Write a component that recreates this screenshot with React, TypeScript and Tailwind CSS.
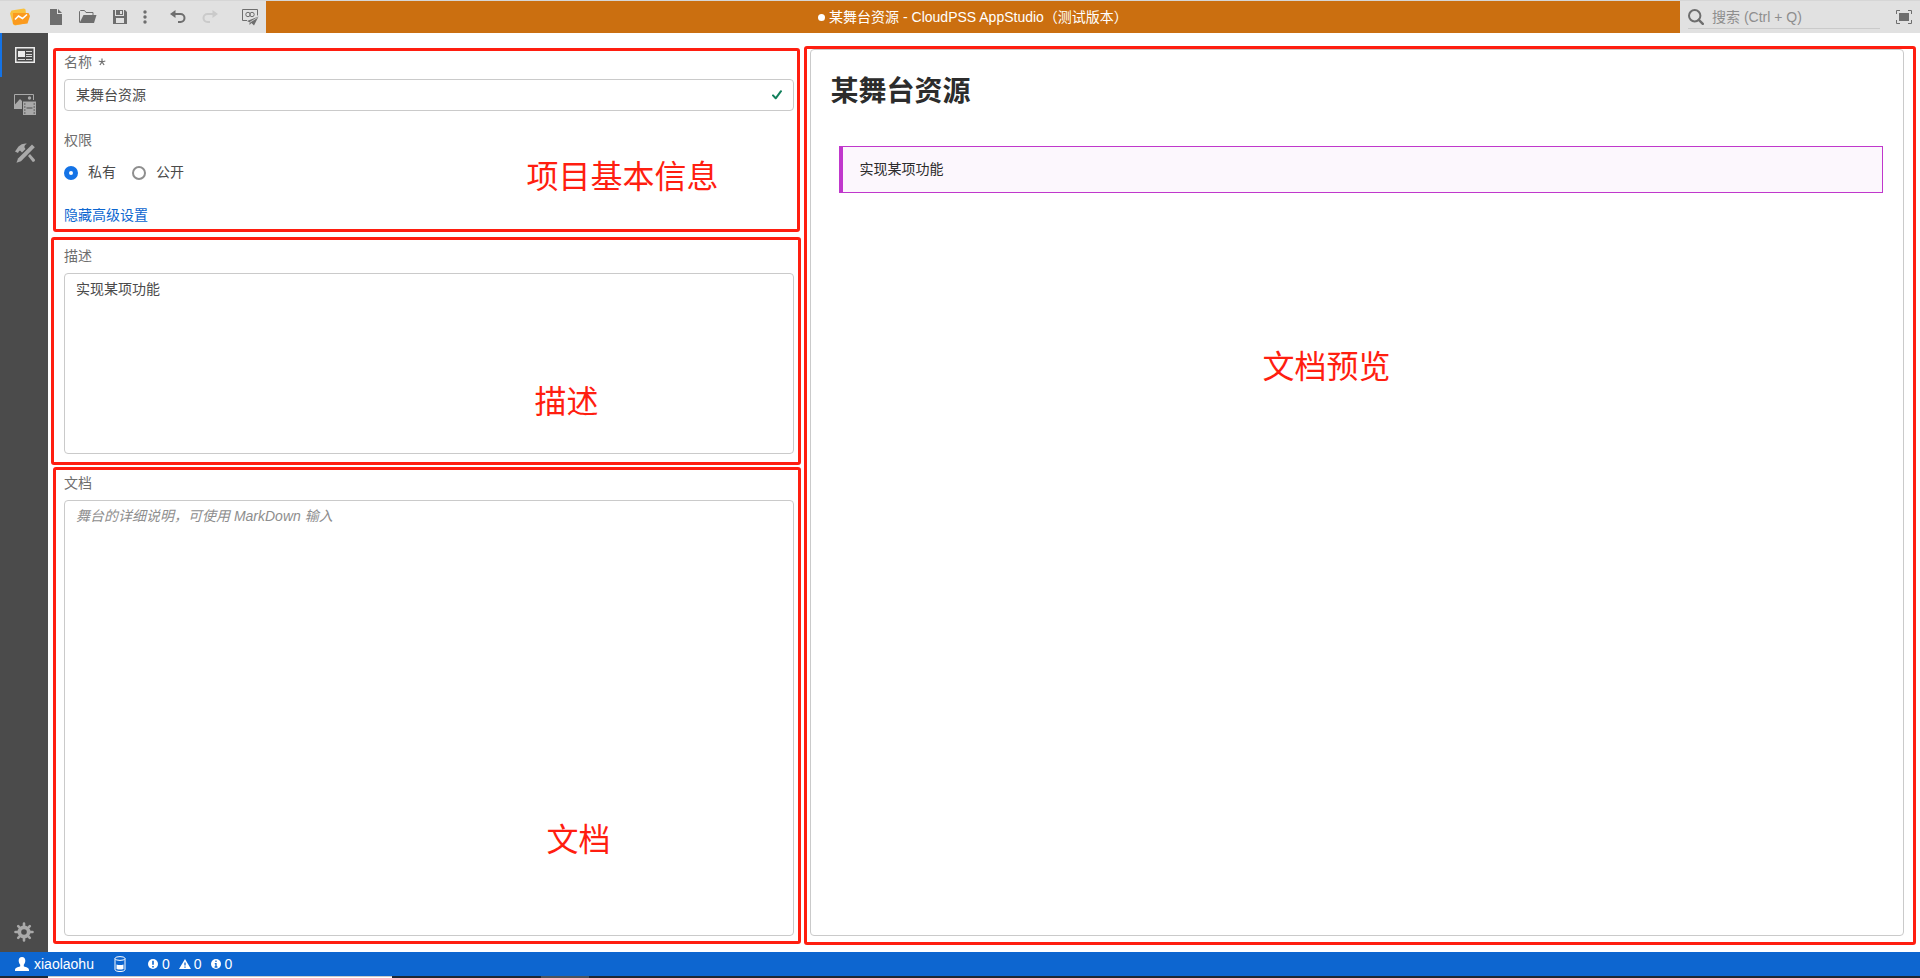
import React, { useState } from "react";

type IconProps = { className?: string };

function LogoIcon() {
  return (
    <svg width="20" height="18" viewBox="0 0 20 18" aria-hidden="true">
      <path d="M1.500 2.500 14 .5l1.500 1L17 15 5 17.500 3 16 0 5.500z" fill="#f9c13d" />
      <path d="M3 5h15.500L20 8l-2.500 7.500L5 17 3 16z" fill="#fb9a1e" />
      <path d="M5 11.500 8.500 8l4 2.500L17 6.500" fill="none" stroke="#fff" strokeWidth="1.600" />
    </svg>
  );
}
function FileIcon() {
  return (
    <svg width="12" height="16" viewBox="0 0 12 16" fill="#6e6e6e" aria-hidden="true">
      <path d="M0 0h7v5h5v11H0z" />
      <path d="M8 0l4 4H8z" />
    </svg>
  );
}
function FolderIcon() {
  return (
    <svg width="18" height="14" viewBox="0 0 18 14" aria-hidden="true">
      <path d="M.5 12.500V1.500L1.500.5h4l1.500 2h7V5" fill="none" stroke="#6e6e6e" />
      <path d="M4.500 5H17.500L15 13H.5z" fill="#6e6e6e" />
    </svg>
  );
}
function SaveIcon() {
  return (
    <svg width="14" height="14" viewBox="0 0 14 14" fill="#6e6e6e" aria-hidden="true">
      <path fillRule="evenodd" d="M0 0h2v6h9V0h1l2 2v12H0zM3 8v5h8V8z" />
      <path d="M3 0h7v5H3zM7 1v3h2V1z" fillRule="evenodd" />
    </svg>
  );
}
function DotsIcon() {
  return (
    <svg width="4" height="14" viewBox="0 0 4 14" fill="#6e6e6e" aria-hidden="true">
      <circle cx="2" cy="2" r="1.700" />
      <circle cx="2" cy="7" r="1.700" />
      <circle cx="2" cy="12" r="1.700" />
    </svg>
  );
}
function UndoIcon({ className }: IconProps) {
  return (
    <svg width="16" height="14" viewBox="0 0 16 14" className={className} aria-hidden="true">
      <path d="M5.500 0v8L0 4z" fill="currentColor" />
      <path d="M4 4h6.500a4 4 0 0 1 0 8H8" fill="none" stroke="currentColor" strokeWidth="2" />
    </svg>
  );
}
function PublishIcon() {
  return (
    <svg width="17" height="17" viewBox="0 0 17 17" fill="none" stroke="#6e6e6e" aria-hidden="true">
      <path d="M5 11.500H.5V.5h15v6" />
      <circle cx="6" cy="5.500" r="2.200" />
      <circle cx="10" cy="5.500" r="2.200" />
      <path d="M16.500 7.500 5 12l2.500 1.200V16l2-2 2.500 2.500z" fill="#6e6e6e" stroke="none" />
      <path d="M15.500 8.500 7.500 13.500" stroke="#e1e1e1" strokeWidth=".8" />
    </svg>
  );
}
function SearchIcon() {
  return (
    <svg width="16" height="16" viewBox="0 0 16 16" className="shrink-0" fill="none" stroke="#6e6e6e" strokeWidth="2" aria-hidden="true">
      <circle cx="6.700" cy="6.700" r="5.700" />
      <path d="m10.800 10.800 4 4" strokeWidth="2.400" strokeLinecap="round" />
    </svg>
  );
}
function FullscreenIcon() {
  return (
    <svg width="16" height="14" viewBox="0 0 16 14" aria-hidden="true">
      <path d="M.5 4V.5H4M12 .5h3.500V4M15.500 10v3.500H12M4 13.500H.5V10" fill="none" stroke="#6e6e6e" />
      <path d="M3 3h10v8H3z" fill="#6e6e6e" />
    </svg>
  );
}
function OverviewIcon() {
  return (
    <svg width="20" height="16" viewBox="0 0 20 16" aria-hidden="true">
      <path d="M.75.75h18.500v14.500H.75z" fill="none" stroke="#ececec" strokeWidth="1.500" />
      <path d="M3 4h7v6H3z" fill="#ececec" />
      <path d="M11 4.500h6M11 7.500h6M11 9.500h6M3 12.500h7M11 12.500h6" stroke="#d6d6d6" />
    </svg>
  );
}
function MediaIcon() {
  return (
    <svg width="22" height="21" viewBox="0 0 22 21" aria-hidden="true">
      <path d="M.5 15V.5h19V6" fill="none" stroke="#a9a9a9" />
      <path d="M0 15V11.500L6 5l2 2v8z" fill="#a9a9a9" />
      <circle cx="15.500" cy="4" r="1.700" fill="#a9a9a9" />
      <path d="M9 7.500h13V21H9z" fill="#a9a9a9" />
      <path d="M12.500 14h6" stroke="#4b4b4b" />
      <path d="M10 10h1.500M10 13h1.500M10 16h1.500M10 19h1.500M19.500 10H21M19.500 13H21M19.500 16H21M19.500 19H21" stroke="#4b4b4b" />
    </svg>
  );
}
function ToolsIcon() {
  return (
    <svg width="20" height="20" viewBox="0 0 20 20" fill="#a9a9a9" aria-hidden="true">
      <path d="M0 8.500 3.500 3.500Q7 0 12 .7 9 2 9.500 4.500L10.500 6 7 9.500 5 7.500Q3.500 8 3 10z" />
      <path d="m13 13 2-2 4.800 5.500q.5 2.500-2 2.500z" />
      <path d="m17 1.500 2.800 2.800L6 18.200 1.500 19.800 3 15.500z" />
    </svg>
  );
}
function GearIcon() {
  return (
    <svg width="20" height="20" viewBox="0 0 20 20" aria-hidden="true">
      <g stroke="#a9a9a9" strokeWidth="2.600" strokeLinecap="round">
        <path d="M10 1.500v17M1.500 10h17M4.200 4.200l11.600 11.600M15.800 4.200 4.200 15.800" />
      </g>
      <circle cx="10" cy="10" r="6.500" fill="#a9a9a9" />
      <circle cx="10" cy="10" r="2.800" fill="#4b4b4b" />
    </svg>
  );
}
function AsteriskIcon() {
  return (
    <svg width="8" height="8" viewBox="0 0 8 8" fill="none" stroke="#6e6e6e" strokeWidth="1.200" aria-hidden="true">
      <path d="M4 .5V4L.7 3M4 4l3.300-1M4 4 1.900 7M4 4l2.100 3" />
    </svg>
  );
}
function CheckIcon() {
  return (
    <svg width="10" height="10" viewBox="0 0 10 10" fill="none" stroke="#12805c" strokeWidth="2" aria-hidden="true">
      <path d="M1 5.400 3.700 8.300 9 1.200" strokeLinecap="round" strokeLinejoin="round" />
    </svg>
  );
}
function UserIcon() {
  return (
    <svg width="14" height="14" viewBox="0 0 14 14" fill="#fff" aria-hidden="true">
      <path d="M7 0c2.200 0 3.300 1.500 3.300 3.600S9.500 7 8.800 7.700v1.500c.4.700 5.200 1 5.200 3.800v1H0v-1c0-2.800 4.800-3.100 5.200-3.800V7.700C4.500 7 3.700 5.700 3.700 3.600S4.800 0 7 0z" />
    </svg>
  );
}
function StorageIcon() {
  return (
    <svg width="12" height="16" viewBox="0 0 12 16" fill="none" stroke="#fff" aria-hidden="true">
      <ellipse cx="6" cy="2.500" rx="5" ry="1.900" />
      <path d="M1 2.500v11c0 1.200 2 2 5 2s5-.8 5-2v-11" />
      <path d="M2.500 8.500q3.500 1.200 7 0V13q-3.500 1.200-7 0z" fill="#fff" stroke="none" />
    </svg>
  );
}
function ErrorIcon() {
  return (
    <svg width="10" height="10" viewBox="0 0 10 10" aria-hidden="true">
      <circle cx="5" cy="5" r="5" fill="#fff" />
      <path d="M5 1.800v4M5 7v1.500" stroke="#0d66d0" strokeWidth="1.600" />
    </svg>
  );
}
function WarningIcon() {
  return (
    <svg width="12" height="10" viewBox="0 0 12 10" aria-hidden="true">
      <path d="M6 0l6 10H0z" fill="#fff" />
      <path d="M6 3.500v3M6 7.500v1.300" stroke="#0d66d0" strokeWidth="1.300" />
    </svg>
  );
}
function InfoIcon() {
  return (
    <svg width="10" height="10" viewBox="0 0 10 10" aria-hidden="true">
      <circle cx="5" cy="5" r="5" fill="#fff" />
      <path d="M5 1.500V3M3.800 4.600H5V8M3.600 8h2.800" stroke="#0d66d0" strokeWidth="1.300" fill="none" />
    </svg>
  );
}

function ToolButton({ label, className = "w-8", children }: { label: string; className?: string; children: React.ReactNode }) {
  return (
    <button type="button" aria-label={label} className={`flex h-8 items-center justify-center ${className}`}>
      {children}
    </button>
  );
}

function Frame({ inset, text, place }: { inset: string; text: string; place: string }) {
  return (
    <div className={`pointer-events-none absolute rounded-[3px] border-3 border-[#ff1e10] ${inset}`}>
      <span className={`absolute text-[32px] leading-10 whitespace-nowrap text-[#ff1e10] ${place}`}>{text}</span>
    </div>
  );
}

const labelClass = "mb-1 block h-[26px] text-sm leading-[26px] text-[#6e6e6e]";
const boxClass = "block w-full rounded border border-[#cacaca] bg-white px-[11px] text-sm text-[#4b4b4b] outline-none";

function RadioOption({ label, checked, onSelect }: { label: string; checked: boolean; onSelect: () => void }) {
  return (
    <label className="flex items-center gap-[10px]">
      <input
        type="radio"
        name="permission"
        checked={checked}
        onChange={onSelect}
        className="size-[14px] appearance-none rounded-full border-2 border-[#8e8e8e] bg-white checked:border-5 checked:border-[#1473e6]"
      />
      <span className="pb-[2px]">{label}</span>
    </label>
  );
}

export default function App() {
  const [name, setName] = useState("某舞台资源");
  const [isPrivate, setIsPrivate] = useState(true);
  const [summary, setSummary] = useState("实现某项功能");

  return (
    <div className="flex h-screen flex-col bg-white font-['Liberation_Sans','Noto_Sans_CJK_SC',sans-serif] text-sm text-[#4b4b4b]">
      <header className="flex h-[33px] shrink-0 border-t border-[#d6d6d6] bg-[#e1e1e1]">
        <div className="flex">
          <div className="flex w-10 items-center justify-center">
            <LogoIcon />
          </div>
          <ToolButton label="新建"><FileIcon /></ToolButton>
          <ToolButton label="打开"><FolderIcon /></ToolButton>
          <ToolButton label="保存"><SaveIcon /></ToolButton>
          <ToolButton label="更多" className="w-[18px]"><DotsIcon /></ToolButton>
          <ToolButton label="撤销" className="ml-2 w-8"><UndoIcon className="text-[#6e6e6e]" /></ToolButton>
          <ToolButton label="重做"><UndoIcon className="-scale-x-100 text-[#cacaca]" /></ToolButton>
          <ToolButton label="发布" className="ml-2 w-8"><PublishIcon /></ToolButton>
        </div>
        <h1 className="flex flex-1 items-center justify-center bg-[#cb6f10] text-white">
          <span className="mr-1 size-[7px] rounded-full bg-white" />
          某舞台资源 - CloudPSS AppStudio（测试版本）
        </h1>
        <div className="flex w-60 items-center justify-between px-2">
          <label className="flex h-6 w-48 items-center gap-2 border-b border-[#cacaca]">
            <SearchIcon />
            <input
              aria-label="搜索"
              placeholder="搜索 (Ctrl + Q)"
              className="w-full min-w-0 bg-transparent outline-none placeholder:text-[#8e8e8e]"
            />
          </label>
          <button type="button" aria-label="全屏"><FullscreenIcon /></button>
        </div>
      </header>

      <div className="flex min-h-0 flex-1">
        <nav className="flex w-12 shrink-0 flex-col gap-[5px] bg-[#4b4b4b]">
          <button type="button" aria-label="总览" className="flex h-11 items-center justify-center border-l-2 border-[#1473e6]">
            <OverviewIcon />
          </button>
          <button type="button" aria-label="资源" className="flex h-11 items-center justify-center pl-[2px]"><MediaIcon /></button>
          <button type="button" aria-label="工具" className="flex h-11 items-center justify-center pl-[2px]"><ToolsIcon /></button>
          <button type="button" aria-label="设置" className="mt-auto flex h-10 items-center justify-center"><GearIcon /></button>
        </nav>

        <main className="grid min-w-0 flex-1 grid-cols-[2fr_3fr] gap-4 p-4">
          <form className="flex min-h-0 flex-col gap-4" onSubmit={(e) => e.preventDefault()}>
            <section className="relative flex flex-col gap-4">
              <div>
                <label htmlFor="name" className={labelClass}>
                  <span className="flex items-center gap-[6px]">名称<AsteriskIcon /></span>
                </label>
                <div className="relative">
                  <input id="name" value={name} onChange={(e) => setName(e.target.value)} className={`h-8 pb-[2px] ${boxClass}`} />
                  <span className="absolute inset-y-0 right-3 flex items-center"><CheckIcon /></span>
                </div>
              </div>
              <fieldset>
                <legend className={labelClass}>权限</legend>
                <div className="flex h-8 items-center gap-4">
                  <RadioOption label="私有" checked={isPrivate} onSelect={() => setIsPrivate(true)} />
                  <RadioOption label="公开" checked={!isPrivate} onSelect={() => setIsPrivate(false)} />
                </div>
              </fieldset>
              <a href="#advanced" className="h-[22px] self-start leading-5 text-[#0d66d0]">隐藏高级设置</a>
              <Frame inset="-top-px -right-[6px] -bottom-[5px] -left-[11px]" text="项目基本信息" place="right-[78px] top-[106px]" />
            </section>

            <section className="relative">
              <label htmlFor="summary" className={labelClass}>描述</label>
              <textarea
                id="summary"
                value={summary}
                onChange={(e) => setSummary(e.target.value)}
                className={`h-[181px] resize-none py-[5px] leading-5 ${boxClass}`}
              />
              <Frame inset="-top-[6px] -right-[7px] -bottom-[11px] -left-[13px]" text="描述" place="right-[199px] top-[142px]" />
            </section>

            <section className="relative flex min-h-0 flex-1 flex-col">
              <label htmlFor="document" className={labelClass}>文档</label>
              <textarea
                id="document"
                placeholder="舞台的详细说明，可使用 MarkDown 输入"
                className={`min-h-0 flex-1 resize-none py-[5px] leading-5 placeholder:text-[#8e8e8e] placeholder:italic ${boxClass}`}
              />
              <Frame inset="-top-[3px] -right-[7px] -bottom-2 -left-[11px]" text="文档" place="right-[187px] bottom-[81px]" />
            </section>
          </form>

          <article className="relative rounded border border-[#cacaca] px-5 text-[#2c2c2c]">
            <h2 className="mt-[22px] mb-[34px] text-[28px] leading-10 font-bold">某舞台资源</h2>
            <blockquote className="ml-2 border border-l-4 border-[#c038cc] bg-[#fcf7fd] px-[17px] py-3 leading-[21px]">
              实现某项功能
            </blockquote>
            <Frame inset="-top-1 -right-[13px] -bottom-[10px] -left-[7px]" text="文档预览" place="left-[456px] top-[298px]" />
          </article>
        </main>
      </div>

      <footer className="shrink-0">
        <div className="flex h-6 items-center bg-[#0d66d0] pl-[15px] text-white">
          <button type="button" className="flex items-center gap-[5px]"><UserIcon />xiaolaohu</button>
          <button type="button" aria-label="存储" className="mr-[22px] ml-5"><StorageIcon /></button>
          <button type="button" className="flex items-center gap-[9px]">
            <span className="flex items-center gap-1"><ErrorIcon />0</span>
            <span className="flex items-center gap-[3px]"><WarningIcon />0</span>
            <span className="flex items-center gap-1"><InfoIcon />0</span>
          </button>
        </div>
        <div className="flex h-[2px] bg-[#1d2733]">
          <div className="ml-12 w-[344px] border-t border-[#cacaca] bg-white" />
          <div className="ml-[149px] w-12 bg-[#4a535d]" />
        </div>
      </footer>
    </div>
  );
}
